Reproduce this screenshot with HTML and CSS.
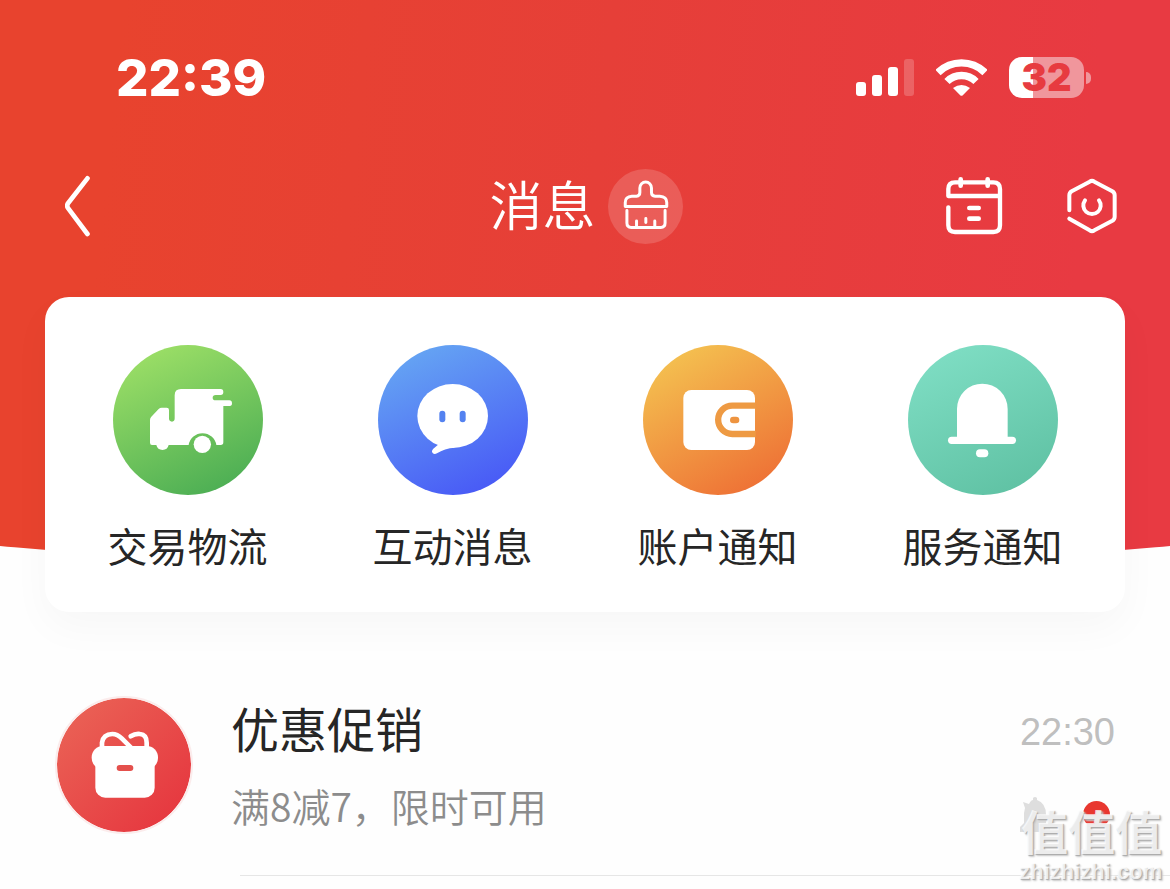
FILE: index.html
```html
<!DOCTYPE html>
<html lang="zh-Hans">
<head>
<meta charset="UTF-8">
<meta name="viewport" content="width=device-width, initial-scale=1.0">
<title>消息</title>
<link rel="stylesheet" href="styles.css">
</head>
<body>
<header class="header">
<div class="status">
<span class="clock">22:39</span>
<div class="status-icons">
<svg class="signal" viewBox="0 0 58 37" width="58" height="37">
<rect x="0" y="23" width="10" height="14" rx="3"/>
<rect x="16" y="16" width="10" height="21" rx="3"/>
<rect x="32" y="8" width="10" height="29" rx="3"/>
<rect class="off" x="48" y="0" width="10" height="37" rx="3"/>
</svg>
<svg class="wifi" viewBox="0 0 51 37" width="51" height="37">
<path d="M2 13.5A33.5 33.5 0 0 1 49 13.5M11 22.5A20.5 20.5 0 0 1 40 22.5" fill="none" stroke="#fff" stroke-width="7.4"/>
<path d="M17 29Q25.500 23 34 29L26.800 36.300Q25.500 37.400 24.200 36.300Z"/>
</svg>
<div class="battery"><span class="level">32</span></div>
</div>
</div>

<nav class="nav">
<button class="icon-btn back" aria-label="返回">
<svg viewBox="78 76 76 184" width="26" height="62"><path d="M144 86L87 159Q81 167 87 175L144 251" stroke-width="14"/></svg>
</button>
<div class="title">
<h1>消息</h1>
<button class="icon-btn clean" aria-label="清除未读">
<svg viewBox="384 27 226 226" width="75" height="75">
<path d="M436 140V128Q436 110 456 109H470Q480 108 480 98V84A17 17 0 0 1 515 84V98Q515 108 526 109H540Q561 110 561 128V140ZM441 152V190Q441 203 454 203H543Q556 203 556 190V152M470 184V202M498 176V188M525 184V202" stroke-width="9"/>
</svg>
</button>
</div>
<div class="actions">
<button class="icon-btn" aria-label="日历">
<svg viewBox="48 50 171 174" width="57" height="58">
<path d="M55 141V195Q55 215 75 215H190Q210 215 210 195V86Q210 66 190 66H75Q55 66 55 86V107H209" stroke-width="13"/>
<path d="M92 57V76M173 57V76M118 143H146M118 175H146" stroke-width="14"/>
</svg>
</button>
<button class="icon-btn" aria-label="设置">
<svg viewBox="410 56 153 168" width="51" height="56">
<path d="M417 153V108Q417 100 424 96L478 67Q485 62 492 67L546 96Q553 100 553 108V172Q553 180 546 184L492 213Q485 218 478 213L417 178" stroke-width="12"/>
<path d="M464 123A26 26 0 1 0 506 123" stroke-width="12"/>
</svg>
</button>
</div>
</nav>
</header>

<main>
<section class="card">
<a class="entry" href="#">
<svg class="badge green" viewBox="39 30 450 450">
<path d="M156 330Q150 330 150 323V255Q150 249 154 245L176 222Q180 218 185 218H200Q207 218 207 225V250Q207 260 216 260Q224 260 224 250V181Q224 162 243 162H362Q370 162 370 171T362 180H347Q338 180 338 188T347 196H388Q396 196 396 205T388 213H370V322Q370 330 362 330H349A42 42 0 0 0 266 330H206A19 19 0 0 1 169 330Z"/>
<circle cx="307" cy="328" r="26"/>
</svg>
<span>交易物流</span>
</a>
<a class="entry" href="#">
<svg class="badge blue" viewBox="39 30 450 450">
<ellipse cx="263" cy="243" rx="106" ry="96"/>
<path d="M228 322L205 341Q198 348 203 354Q208 360 216 355Q238 340 270 338Z"/>
<rect x="223" y="227" width="18" height="35" rx="9" fill="#5482f0"/>
<rect x="284" y="227" width="18" height="35" rx="9" fill="#5482f0"/>
</svg>
<span>互动消息</span>
</a>
<a class="entry" href="#">
<svg class="badge orange" viewBox="39 30 450 450">
<rect x="160" y="165" width="215" height="180" rx="24"/>
<path d="M377 212H307A42 42 0 0 0 307 297H377" fill="none" stroke="#ee9a43" stroke-width="19"/>
<rect x="300" y="245" width="28" height="20" rx="10" fill="#ee9440"/>
</svg>
<span>账户通知</span>
</a>
<a class="entry" href="#">
<svg class="badge teal" viewBox="39 30 450 450">
<path d="M186 310V222A76 76 0 0 1 338 222V310Z"/>
<rect x="159" y="305" width="204" height="22" rx="11"/>
<rect x="243" y="343" width="37" height="24" rx="12"/>
</svg>
<span>服务通知</span>
</a>
</section>

<a class="message" href="#">
<svg class="avatar" viewBox="51 54 402 402">
<rect x="155" y="198" width="199" height="70" rx="34"/>
<rect x="166" y="204" width="178" height="149" rx="30"/>
<path d="M186 208V188Q190 162 217 162Q232 162 246 176L276 206M272 169Q286 160 300 162Q320 164 320 188V208" fill="none" stroke="#fff" stroke-width="14" stroke-linecap="round"/>
<rect x="230" y="255" width="50" height="18" rx="9" fill="#e4504c"/>
</svg>
<div class="text">
<h2>优惠促销</h2>
<p>满8减7，限时可用</p>
</div>
<div class="meta">
<time>22:30</time>
<div class="flags">
<svg class="muted" viewBox="0 0 30 36" width="30" height="36"><path d="M3 6L9 8Q11 4 13 4V2Q15 0 17 2V4Q26 7 26 19V27L30 32V36H0V31L4 27V17L5 12Z"/></svg>
<span class="dot"></span>
</div>
</div>
</a>
</main>

<div class="watermark">
<strong>值值值</strong>
<span>zhizhizhi.com</span>
</div>
</body>
</html>
```

FILE: styles.css
```css
* {
box-sizing: border-box;
}

body {
position: relative;
min-height: 100vh;
margin: 0;
overflow-x: hidden;
background: #fefefe;
color: #262626;
font-family: "Liberation Sans", "Noto Sans CJK SC", sans-serif;
}

h1, h2, p {
margin: 0;
font-weight: 400;
}

a {
color: inherit;
text-decoration: none;
}

.header {
height: 572px;
background: linear-gradient(96deg, #e8432e 10%, #e63f38 50%, #e83a42 90%);
clip-path: ellipse(168% 100% at 50% 0);
color: #fff;
}

.status {
display: flex;
justify-content: space-between;
align-items: center;
height: 155px;
padding: 0 79px 0 116px;
}

.clock {
font: 800 51px/60px Inter, sans-serif;
}

.status-icons {
display: flex;
align-items: center;
}

.status-icons svg {
fill: #fff;
}

.signal .off {
opacity: .2;
}

.wifi {
margin: 0 22px;
}

.battery {
position: relative;
width: 75px;
height: 41px;
margin-right: 7px;
border-radius: 13px;
background: linear-gradient(90deg, #fff 24px, #f0969c 24px);
text-align: center;
}

.battery::after {
content: "";
position: absolute;
top: 15px;
right: -7px;
width: 5px;
height: 12px;
border-radius: 0 6px 6px 0;
background: #f0969c;
}

.level {
color: #e73b40;
font: 900 38px/41px Inter, sans-serif;
}

.nav {
display: grid;
grid-template-columns: 1fr auto 1fr;
align-items: center;
height: 102px;
padding: 0 52px 0 54px;
}

.icon-btn {
display: flex;
padding: 0;
border: 0;
background: none;
cursor: pointer;
}

.icon-btn svg {
fill: none;
stroke: #fff;
stroke-linecap: round;
stroke-linejoin: round;
}

.back {
justify-self: start;
padding-left: 11px;
}

.title {
display: flex;
align-items: center;
gap: 12px;
}

.title h1 {
padding-top: 4px;
font-size: 53px;
font-weight: 350;
line-height: 72px;
}

.clean {
border-radius: 50%;
background: rgba(255, 255, 255, .16);
}

.actions {
display: flex;
justify-content: flex-end;
align-items: center;
gap: 64px;
}

.card {
position: relative;
display: grid;
grid-template-columns: repeat(4, 1fr);
margin: -275px 45px 0;
padding: 48px 10px 40px;
border-radius: 24px;
background: #fff;
box-shadow: 0 16px 40px rgba(0, 0, 0, .03);
}

.entry {
display: flex;
flex-direction: column;
align-items: center;
gap: 29px;
font-size: 40px;
line-height: 48px;
}

.badge {
width: 150px;
height: 150px;
border-radius: 50%;
fill: #fff;
}

.green {
background: linear-gradient(155deg, #9bde66 10%, #4cae54 90%);
}

.blue {
background: linear-gradient(155deg, #65a4f3 10%, #4859f6 90%);
}

.orange {
background: linear-gradient(150deg, #f4c150 10%, #ee7035 90%);
}

.teal {
background: linear-gradient(155deg, #7eddc3 10%, #60c2a4 90%);
}

.message {
display: grid;
grid-template-columns: 138px 1fr auto;
column-gap: 38px;
height: 264px;
padding: 84px 55px 0;
background: linear-gradient(#e6e6e6, #e6e6e6) 240px 100% / 100% 1px no-repeat;
}

.avatar {
width: 138px;
height: 138px;
border: 2px solid #fbecec;
border-radius: 50%;
background: linear-gradient(135deg, #ea6155 10%, #e6373f 90%) padding-box;
fill: #fff;
}

.text h2 {
font-size: 48px;
line-height: 72px;
}

.text p {
margin-top: 7px;
color: #8c8c8c;
font-family: "Noto Sans CJK SC", sans-serif;
font-size: 39px;
font-weight: 350;
line-height: 60px;
}

.meta {
color: #bfbfbf;
font-size: 38px;
line-height: 72px;
}

.flags {
display: flex;
justify-content: space-between;
align-items: center;
height: 36px;
margin-top: 28px;
padding-right: 5px;
}

.muted {
fill: #dedede;
}

.dot {
width: 27px;
height: 27px;
border-radius: 50%;
background: #e8372f;
}

/* site mark over the bottom right corner */
.watermark {
position: absolute;
right: 8px;
bottom: 4px;
display: flex;
flex-direction: column;
align-items: flex-end;
color: rgba(255, 255, 255, .8);
text-shadow: 1px 1px 1px #aaa, 2px 2px 2px #ccc;
pointer-events: none;
}

.watermark strong {
font-size: 47px;
font-weight: 700;
line-height: 50px;
}

.watermark span {
font-size: 22px;
font-weight: 700;
line-height: 26px;
}
```
